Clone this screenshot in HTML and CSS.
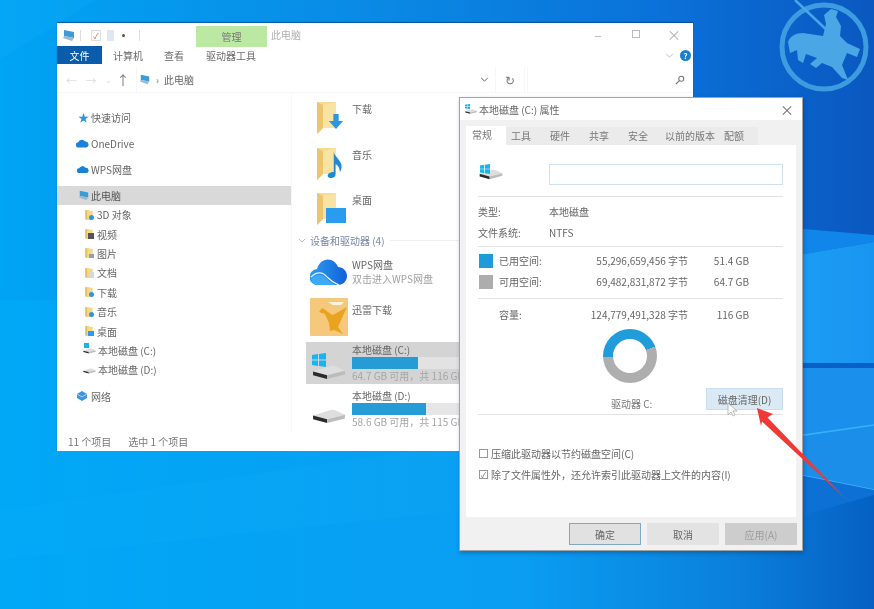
FILE: index.html
```html
<!DOCTYPE html>
<html lang="zh-CN">
<head>
<meta charset="utf-8">
<title>本地磁盘 (C:) 属性</title>
<link rel="stylesheet" href="styles.css">
</head>
<body>
<svg class="defs" width="0" height="0" aria-hidden="true">
  <symbol id="pc" viewBox="0 0 14 13"><path d="M2 1l10 2v6L2 7z" fill="#3d9bd8"/><path d="M2 7l10 2-2 3-9-3z" fill="#9fb9cc"/></symbol>
  <symbol id="mini-folder" viewBox="0 0 8 13"><path d="M0 1h4l1 1h3v10H2L0 11z" fill="#f4d98c"/><path d="M0 1l2 1v10l-2-1z" fill="#e8bf5e"/></symbol>
  <symbol id="folder" viewBox="0 0 20 32"><path d="M0 0h19v26H6l-6 6z" fill="#f6dc90"/><path d="M0 0l6 3v23l-6 6z" fill="#ecc56c"/><path d="M6 3l13-3v26H6z" fill="#f9e3a2"/></symbol>
  <symbol id="drive" viewBox="0 0 36 16"><path d="M1 7L20 1Q22 .5 24 1L35 6 16 11z" fill="#dedede"/><path d="M1 7L16 11V15L1 11z" fill="#2b2b2b"/><path d="M16 11L35 6V10L16 15z" fill="#bcbcbc"/></symbol>
  <symbol id="win" viewBox="0 0 14 14"><path d="M0 2l6-1v5.500H0zM7 1l7-1v6.500H7zM0 7.500h6V13l-6-1zM7 7.500h7V14l-7-1z" fill="#19b3ee"/></symbol>
  <symbol id="cloud" viewBox="0 0 20 12"><path d="M4 12a4 4 0 0 1-.500-8A6 6 0 0 1 14 3a4.500 4.500 0 0 1 1.500 9z" fill="#1a80d8"/></symbol>
</svg>

<main class="desktop">
  <svg class="wallpaper" viewBox="0 0 874 609" aria-hidden="true">
    <defs>
      <linearGradient id="wave" x1="0" y1="0" x2="1" y2="0"><stop offset="0" stop-color="#22a6fb"/><stop offset="1" stop-color="#1895f0"/></linearGradient>
    </defs>
    <path d="M0 0L95 0 0 60z" fill="#12adf8" opacity=".25"/>
    <path d="M0 560L0 510 560 430V500z" fill="#1cb4ff" opacity=".12"/>
    <path d="M700 220L874 235V242L700 272z" fill="#1186ea"/>
    <path d="M700 272L874 242V363H700z" fill="url(#wave)"/>
    <path d="M700 363H874V368H700z" fill="#0a60c8"/>
    <path d="M700 368H874V425L700 450z" fill="#1a90ec"/>
    <path d="M700 450L874 425V490L700 455z" fill="#1b8eea"/>
    <path d="M700 450L874 425" stroke="#36b2fb" stroke-width="1.500"/>
    <path d="M700 455L874 490" stroke="#42b5fa" stroke-width="1.500"/>
    <path d="M700 455L874 490V495L700 545z" fill="#0c70d4"/>
    <g class="logo">
      <circle cx="824" cy="47" r="42" fill="none" stroke="#3d9ce0" stroke-width="5"/>
      <path d="M795 0L850 52" stroke="#4ba6e6" stroke-width="2.500"/>
      <path d="M788 42C790 36 796 33 803 33L823 36 826 24 824 15 831 9 838 11 836 17 841 26 840 36 847 43 860 49 857 57 847 53 842 65 848 80 842 78 832 67 822 63 816 68 810 64 817 58 806 54 803 63 798 60 797 50 790 53z" fill="#4ba6e6"/>
    </g>
  </svg>

  <section class="window explorer">
    <header class="exp-title">
      <svg class="ic-14"><use href="#pc"/></svg>
      <span class="vsep"></span>
      <span class="qa-check">✓</span>
      <span class="qa-doc"></span>
      <span class="qa-dot"></span>
      <span class="vsep"></span>
      <span class="manage">管理</span>
      <span class="win-title">此电脑</span>
      <span class="controls">
        <span class="ctl">–</span><span class="ctl ctl-max"></span><span class="ctl">×</span>
      </span>
    </header>
    <nav class="ribbon">
      <span class="rtab rtab-file">文件</span>
      <span class="rtab rtab-pc">计算机</span>
      <span class="rtab rtab-view">查看</span>
      <span class="rtab rtab-tool">驱动器工具</span>
      <span class="rib-right">
        <svg class="chev" viewBox="0 0 10 6"><path d="M1 1l4 4 4-4" fill="none" stroke="#b5b5b5"/></svg>
        <span class="help">?</span>
      </span>
    </nav>
    <div class="addr">
      <div class="addr-nav">
        <span class="arrow">←</span><span class="arrow">→</span><span class="arrow arrow-sm">⌄</span><span class="arrow arrow-up">↑</span>
      </div>
      <div class="addr-box">
        <svg class="ic-12"><use href="#pc"/></svg><span class="crumb-sep">›</span><span>此电脑</span>
        <svg class="chev chev-dark" viewBox="0 0 10 6"><path d="M1 1l4 4 4-4" fill="none" stroke="#666" stroke-width="1.200"/></svg>
      </div>
      <div class="addr-refresh">↻</div>
      <div class="addr-search">
        <svg class="search" viewBox="0 0 12 12"><circle cx="7.500" cy="4.500" r="3" fill="none" stroke="#777" stroke-width="1.300"/><path d="M5 7l-4 4" stroke="#777" stroke-width="1.500"/></svg>
      </div>
    </div>
    <div class="exp-body">
      <ul class="nav">
        <li class="nav-item group"><span class="star">★</span>快速访问</li>
        <li class="nav-item group"><svg class="nav-cloud"><use href="#cloud"/></svg>OneDrive</li>
        <li class="nav-item group"><svg class="nav-cloud nav-cloud-sm"><use href="#cloud"/></svg>WPS网盘</li>
        <li class="nav-item group selected"><svg class="ic-12"><use href="#pc"/></svg>此电脑</li>
        <li class="nav-item child"><span class="nf nf-blue"><svg><use href="#mini-folder"/></svg></span>3D 对象</li>
        <li class="nav-item child"><span class="nf nf-dark"><svg><use href="#mini-folder"/></svg></span>视频</li>
        <li class="nav-item child"><span class="nf nf-gray"><svg><use href="#mini-folder"/></svg></span>图片</li>
        <li class="nav-item child"><span class="nf nf-light"><svg><use href="#mini-folder"/></svg></span>文档</li>
        <li class="nav-item child"><span class="nf nf-blue"><svg><use href="#mini-folder"/></svg></span>下载</li>
        <li class="nav-item child"><span class="nf nf-blue"><svg><use href="#mini-folder"/></svg></span>音乐</li>
        <li class="nav-item child"><span class="nf nf-desk"><svg><use href="#mini-folder"/></svg></span>桌面</li>
        <li class="nav-item child child-drive"><span class="nd nd-win"><svg><use href="#drive"/></svg></span>本地磁盘 (C:)</li>
        <li class="nav-item child child-drive"><span class="nd"><svg><use href="#drive"/></svg></span>本地磁盘 (D:)</li>
        <li class="nav-item group"><svg class="net" viewBox="0 0 12 12"><path d="M6 1l5 3v4l-5 3-5-3V4z" fill="#3c96d8"/><path d="M1 4l5 3 5-3" fill="none" stroke="#a8d4f0"/></svg>网络</li>
      </ul>
      <div class="content">
        <div class="folder-row">
          <span class="folder-ic">
            <svg class="folder"><use href="#folder"/></svg>
            <svg class="badge" viewBox="0 0 18 18"><path d="M6 0h6v8h5l-8 9-8-9h5z" fill="#2e96e0"/></svg>
          </span>
          <span class="name">下载</span>
        </div>
        <div class="folder-row">
          <span class="folder-ic">
            <svg class="folder"><use href="#folder"/></svg>
            <svg class="badge badge-note" viewBox="0 0 18 30"><path d="M7 0c1 6 9 9 9 17 0 3-1 5-2 6 0-6-3-8-5-9v12c0 3-3 4-5 4s-4-1-4-3 3-4 7-4z" fill="#1f88d8"/></svg>
          </span>
          <span class="name">音乐</span>
        </div>
        <div class="folder-row">
          <span class="folder-ic">
            <svg class="folder"><use href="#folder"/></svg>
            <span class="badge-desk"></span>
          </span>
          <span class="name">桌面</span>
        </div>
        <div class="section-head">
          <svg class="chev chev-sec" viewBox="0 0 10 6"><path d="M1 1l4 4 4-4" fill="none" stroke="#aaa"/></svg>
          <span>设备和驱动器 (4)</span><span class="section-line"></span>
        </div>
        <div class="dev dev-wps">
          <span class="dev-ic">
            <svg class="wps" viewBox="0 0 37 27"><defs><linearGradient id="wpsg" x1="0" y1="0" x2="1" y2="0"><stop offset="0" stop-color="#2f9df0"/><stop offset="1" stop-color="#0f62d8"/></linearGradient></defs><path d="M8 27a8 8 0 0 1-1-16C9 4 15 0 21 2c3 1 6 4 7 7 5 0 9 4 9 9s-4 9-9 9z" fill="url(#wpsg)"/><path d="M1 21c6-6 12-5 16 0 3 3 6 4 9 6H8c-3 0-6-2-7-6z" fill="#3caaf6"/><path d="M1 19c6-6 12-5 16 0 3 3 7 6 12 8" fill="none" stroke="#e6f4ff" stroke-width="1.200"/></svg>
          </span>
          <span class="dev-text"><span class="name">WPS网盘</span><span class="sub">双击进入WPS网盘</span></span>
        </div>
        <div class="dev dev-xl">
          <span class="dev-ic">
            <span class="xl">
              <svg viewBox="0 0 38 38"><path d="M12 10c4 2 8 6 11 7l14-8-5 11-4 9 5 7-9-4-4 1-1-8-4-9-6-2z" fill="#e8a320"/><path d="M18 4h16l-3 3H23z" fill="#fff4df"/></svg>
            </span>
          </span>
          <span class="dev-text"><span class="name">迅雷下载</span></span>
        </div>
        <div class="dev drive-row drive-c">
          <span class="dev-ic dev-drive">
            <svg class="w-logo"><use href="#win"/></svg>
            <svg class="big-drive"><use href="#drive"/></svg>
          </span>
          <span class="dev-text">
            <span class="name">本地磁盘 (C:)</span>
            <span class="track"><span class="fill" style="width:66px"></span></span>
            <span class="sub">64.7 GB 可用，共 116 GB</span>
          </span>
        </div>
        <div class="dev drive-row drive-d">
          <span class="dev-ic dev-drive">
            <svg class="big-drive"><use href="#drive"/></svg>
          </span>
          <span class="dev-text">
            <span class="name">本地磁盘 (D:)</span>
            <span class="track"><span class="fill" style="width:74px"></span></span>
            <span class="sub">58.6 GB 可用，共 115 GB</span>
          </span>
        </div>
      </div>
    </div>
    <footer class="status"><span>11 个项目</span><span>选中 1 个项目</span></footer>
  </section>

  <section class="window dialog">
    <header class="dlg-title">
      <span class="dlg-ic"><svg class="dlg-w"><use href="#win"/></svg><svg class="dlg-d"><use href="#drive"/></svg></span>
      <span>本地磁盘 (C:) 属性</span>
      <span class="dlg-close">×</span>
    </header>
    <div class="tabs">
      <span class="tab tab-on">常规</span><span class="tab">工具</span><span class="tab">硬件</span><span class="tab">共享</span><span class="tab">安全</span><span class="tab tab-wide">以前的版本</span><span class="tab">配额</span>
    </div>
    <div class="panel">
      <div class="head-row">
        <span class="head-ic"><svg class="head-d"><use href="#drive"/></svg><svg class="head-w"><use href="#win"/></svg></span>
        <span class="vol-input"></span>
      </div>
      <hr class="sep sep-a">
      <div class="info"><span>类型:</span><span>本地磁盘</span></div>
      <div class="info"><span>文件系统:</span><span>NTFS</span></div>
      <hr class="sep sep-b">
      <div class="space"><i class="sw sw-used"></i><span>已用空间:</span><span class="bytes">55,296,659,456 字节</span><span class="gb">51.4 GB</span></div>
      <div class="space"><i class="sw sw-free"></i><span>可用空间:</span><span class="bytes">69,482,831,872 字节</span><span class="gb">64.7 GB</span></div>
      <hr class="sep sep-c">
      <div class="space"><i class="sw"></i><span>容量:</span><span class="bytes">124,779,491,328 字节</span><span class="gb">116 GB</span></div>
      <div class="donut"><span class="hole"></span></div>
      <div class="drive-foot"><span class="drive-label">驱动器 C:</span><span class="clean">磁盘清理(D)</span></div>
      <hr class="sep sep-d">
      <label class="check check-first"><i class="box"></i>压缩此驱动器以节约磁盘空间(C)</label>
      <label class="check"><i class="box box-on">✓</i>除了文件属性外，还允许索引此驱动器上文件的内容(I)</label>
    </div>
    <footer class="dlg-foot">
      <span class="btn btn-def">确定</span><span class="btn">取消</span><span class="btn btn-off">应用(A)</span>
    </footer>
  </section>

  <svg class="overlay" viewBox="0 0 874 609" aria-hidden="true">
    <path d="M728 403v12l3-3 2 4 2-1-2-4h4z" fill="#fff" stroke="#aaa" stroke-width=".8"/>
    <path d="M757 408L773 414 767.500 417.500 850 503 762 421.500 761 426z" fill="#ee3a36"/>
  </svg>
</main>
</body>
</html>
```

FILE: styles.css
```css
* { box-sizing: border-box; }
html, body { margin: 0; padding: 0; }
body {
  font-family: "Noto Sans CJK SC", "Noto Sans", sans-serif;
  font-size: 10px;
  color: #5c5c5c;
  overflow: hidden;
}
.defs { position: absolute; }
ul { list-style: none; margin: 0; padding: 0; }
hr { margin: 0; border: 0; }
svg { display: block; flex: none; }

.desktop {
  position: relative;
  width: 874px;
  height: 609px;
  overflow: hidden;
  filter: blur(0.55px);
  background:
    linear-gradient(90deg, #00a4f4 0, #0a8ae4 42%, #0a72da 75%, #0a58c0 100%) top / 100% 300px no-repeat,
    linear-gradient(90deg, #00a8f6 0, #0a9df1 60%, #0a80dc 84%, #0660c4 100%) bottom / 100% 309px no-repeat;
}
.wallpaper, .overlay { position: absolute; inset: 0; width: 874px; height: 609px; }
.overlay { pointer-events: none; }

.window { position: absolute; background: #fff; }

/* Explorer */
.explorer {
  left: 57px; top: 23px; width: 636px; height: 428px;
  display: flex; flex-direction: column;
  box-shadow: 0 -1px 1px rgba(0, 60, 130, .6);
}
.exp-title { height: 24px; display: flex; align-items: center; padding-left: 5px; position: relative; }
.ic-14 { width: 14px; height: 13px; }
.ic-12 { width: 12px; height: 11px; }
.vsep { width: 1px; height: 11px; background: #ddd; margin: 0 6px 0 4px; }
.vsep + .qa-check { margin-left: 4px; }
.qa-check { width: 10px; height: 11px; border: 1px solid #ddd; color: #e0564a; font-size: 8px; line-height: 9px; text-align: center; }
.qa-doc { width: 7px; height: 11px; background: #dfe8f2; margin-left: 6px; }
.qa-dot { width: 3px; height: 3px; background: #555; border-radius: 50%; margin: 0 10px 0 8px; }
.manage {
  position: absolute; left: 139px; top: 3px; width: 71px; height: 21px;
  background: #bbe8a2; color: #777; display: flex; align-items: center; justify-content: center;
}
.win-title { position: absolute; left: 214px; top: 4px; color: #b0b0b0; }
.controls { position: absolute; right: 0; top: 0; display: flex; height: 22px; align-items: center; color: #b5b5b5; font-size: 14px; }
.ctl { width: 38px; text-align: center; }
.ctl-max { width: 8px; height: 8px; border: 1px solid #bbb; margin: 0 15px; }

.ribbon { height: 17px; display: flex; align-items: center; position: relative; }
.rtab { color: #6a6a6a; }
.rtab-file { width: 45px; height: 18px; margin-top: -1px; background: #0b5cab; color: #fff; display: flex; align-items: center; justify-content: center; }
.rtab-pc { margin-left: 11px; }
.rtab-view { margin-left: 21px; }
.rtab-tool { margin-left: 22px; }
.rib-right { margin-left: auto; display: flex; align-items: center; gap: 6px; padding-right: 2px; }
.chev { width: 9px; height: 5px; }
.help { width: 11px; height: 11px; border-radius: 50%; background: #1a7ed0; color: #fff; font-size: 8px; font-weight: 700; line-height: 11px; text-align: center; }

.addr { height: 29px; display: flex; align-items: stretch; padding-top: 3px; border-bottom: 1px solid #f6f6f6; }
.addr-nav { width: 79px; display: flex; align-items: center; padding-left: 9px; color: #ddd; font-size: 11px; }
.arrow { width: 21px; text-align: left; }
.arrow-sm { width: 12px; font-size: 8px; }
.arrow-up { color: #777; font-size: 13px; }
.addr-box { width: 359px; display: flex; align-items: center; padding: 0 6px 0 2px; background: #fff; border-left: 1px solid #f6f6f6; color: #666; }
.crumb-sep { margin: 0 5px; color: #777; }
.chev-dark { margin-left: auto; }
.addr-refresh { width: 30px; display: flex; align-items: center; justify-content: center; color: #777; font-size: 12px; border-left: 1px solid #f6f6f6; border-right: 1px solid #f6f6f6; }
.addr-search { margin-left: 2px; width: 163px; display: flex; align-items: center; justify-content: flex-end; padding-right: 5px; border-left: 1px solid #f6f6f6; }
.search { width: 10px; height: 10px; }

.exp-body { flex: 1; display: grid; grid-template-columns: 235px 1fr; min-height: 0; }
.nav { padding-top: 15px; border-right: 1px solid #f8f8f8; }
.nav-item { display: flex; align-items: center; white-space: nowrap; color: #666; }
.group { height: 19px; margin-top: 7px; padding-left: 22px; gap: 2px; }
.group:first-child { margin-top: 0; }
.selected { background: #d9d9d9; padding-left: 21px; color: #555; gap: 1px; }
.child { height: 19.4px; padding-left: 28px; gap: 4px; }
.child-drive { padding-left: 26px; gap: 2px; }
.star { color: #2b94dc; font-size: 11px; line-height: 1; margin-left: -1px; }
.nav-cloud { width: 13px; height: 9px; margin-left: -3px; }
.nav-cloud-sm { width: 12px; margin-left: -2px; }
.nf { position: relative; width: 8px; height: 12px; flex: none; }
.nf svg { width: 8px; height: 12px; }
.nf::after { content: ""; position: absolute; right: -1px; bottom: 1px; width: 5px; height: 5px; }
.nf-blue::after { background: #2e96e0; border-radius: 50%; }
.nf-dark::after { background: #555; width: 6px; height: 6px; }
.nf-gray::after { background: #8fa3a8; height: 4px; }
.nf-light::after { background: #d4d8dc; height: 6px; }
.nf-desk::after { background: #2a9cf0; width: 6px; height: 5px; }
.nd { position: relative; width: 13px; height: 8px; flex: none; }
.nd svg { width: 13px; height: 6px; margin-top: 2px; }
.nd-win::before { content: ""; position: absolute; left: 1px; top: -3px; width: 5px; height: 5px; background: #19b3ee; }
.net { width: 12px; height: 12px; margin-left: -3px; margin-right: 1px; }

.content { padding-top: 9px; min-width: 0; overflow: hidden; }
.folder-row { height: 32px; margin-bottom: 13.5px; margin-left: 25px; display: flex; }
.folder-row:nth-child(3) { margin-bottom: 0; }
.folder-ic { position: relative; width: 35px; height: 32px; flex: none; }
.folder { width: 20px; height: 32px; }
.badge { position: absolute; left: 11px; top: 11px; width: 16px; height: 18px; }
.badge-note { left: 10px; top: 4px; width: 17px; height: 26px; }
.badge-desk { position: absolute; left: 9px; top: 15px; width: 20px; height: 15px; background: #2a9cf0; }
.name { line-height: 14px; color: #666; white-space: nowrap; }
.sub { line-height: 14px; color: #a0a0a0; white-space: nowrap; }
.folder-row .name { display: block; }

.section-head { height: 14px; margin: 8px 0 0 6px; display: flex; align-items: center; color: #7a86a8; white-space: nowrap; gap: 4px; }
.section-line { flex: 1; height: 1px; background: #eee; margin-left: 1px; }
.chev-sec { width: 8px; height: 5px; }

.dev { display: flex; margin-left: 14px; }
.dev-ic { width: 46px; flex: none; padding-left: 4px; position: relative; }
.dev-text { display: flex; flex-direction: column; }
.dev-wps { margin-top: 11px; height: 27px; }
.wps { width: 37px; height: 27px; }
.dev-xl { margin-top: 13px; height: 38px; }
.dev-xl .dev-text { padding-top: 5px; }
.xl { display: block; width: 38px; height: 38px; background: #f6c87c; border-radius: 1px; }
.xl svg { width: 38px; height: 38px; }
.drive-row { height: 42px; }
.drive-row .dev-text { padding-top: 1px; }
.drive-c { margin-top: 6px; background: #d4d4d4; }
.drive-d { margin-top: 4px; }
.track { display: block; width: 150px; height: 12px; background: #e6e6e6; margin: 0; flex: none; }
.drive-c .track { background: #e2e2e2; }
.fill { display: block; height: 12px; background: #269cd6; }
.drive-row .sub { color: #a5a5a5; }
.dev-drive { padding: 0; }
.big-drive { position: absolute; left: 6px; bottom: 4px; width: 34px; height: 15px; }
.drive-d .big-drive { bottom: 6px; }
.w-logo { position: absolute; left: 6px; top: 11px; width: 14px; height: 14px; }

.status { height: 19px; display: flex; gap: 17px; align-items: center; padding-left: 11px; color: #777; }

/* Dialog */
.dialog {
  left: 459px; top: 97px; width: 344px; height: 454px;
  border: 1px solid #a3a3a3;
  box-shadow: 1px 2px 4px rgba(0, 40, 90, .35);
  display: flex; flex-direction: column;
  background: #f1f1f1;
}
.dlg-title { height: 22px; flex: none; background: #fff; display: flex; align-items: center; padding-left: 5px; color: #666; gap: 1px; }
.dlg-ic { position: relative; width: 13px; height: 11px; }
.dlg-w { position: absolute; left: 0; top: 0; width: 5px; height: 5px; }
.dlg-d { position: absolute; left: 0; bottom: 0; width: 12px; height: 7px; }
.dlg-close { margin-left: auto; margin-right: 8px; font-size: 14px; line-height: 1; color: #777; }

.tabs { height: 25px; flex: none; display: flex; padding: 7px 0 0 6px; }
.tab { padding: 0 14px 0 5px; background: #ebebeb; color: #777; line-height: 18px; white-space: nowrap; height: 18px; }
.tab-on { width: 40px; padding: 0 0 0 6px; background: #fff; height: 19px; margin-top: -1px; }
.tab-wide { margin-left: -2px; padding-right: 4px; }

.panel { flex: none; height: 372px; margin: 0 6px; background: #fff; padding: 0 13px 0 12px; position: relative; color: #666; }
.head-row { display: flex; padding-top: 19px; height: 40px; }
.head-ic { width: 71px; position: relative; }
.head-w { position: absolute; left: 2px; top: 0; width: 10px; height: 10px; }
.head-d { position: absolute; left: 1px; top: 5px; width: 24px; height: 11px; }
.vol-input { flex: 1; height: 21px; border: 1px solid #cfe0ee; }
.sep { height: 1px; background: #e2e2e2; }
.sep-a { margin-top: 11px; }
.info { height: 21px; display: grid; grid-template-columns: 71px 1fr; align-items: center; }
.sep-a + .info { margin-top: 4px; }
.sep-b { margin-top: 3px; margin-bottom: 3px; }
.space { height: 21px; display: grid; grid-template-columns: 21px 60px 129px 61px; align-items: center; }
.sw { width: 14px; height: 14px; margin-left: 1px; }
.sw-used { background: #1f9bd8; }
.sw-free { background: #adadad; }
.bytes, .gb { text-align: right; white-space: nowrap; }
.sep-c { margin: 6px 0 5px; }
.donut {
  width: 54px; height: 54px; border-radius: 50%; margin: 4px 0 0 125px;
  background: conic-gradient(from 268deg, #219cda 0 161deg, #aeaeae 161deg 360deg);
  display: flex; align-items: center; justify-content: center;
}
.hole { width: 34px; height: 34px; background: #fff; border-radius: 50%; }
.drive-foot { display: flex; height: 22px; margin-top: 5px; align-items: flex-end; }
.drive-label { margin-left: 133px; line-height: 12px; white-space: nowrap; color: #777; }
.clean {
  margin-left: auto; width: 77px; height: 22px; background: #dbe9f5; border: 1px solid #c9dff0;
  display: flex; align-items: center; justify-content: center; color: #666; white-space: nowrap;
}
.sep-d { margin-top: 4px; }
.check { height: 21px; display: flex; align-items: center; gap: 3px; white-space: nowrap; }
.check-first { margin-top: 28px; }
.box { width: 9px; height: 9px; margin-left: 1px; border: 1px solid #999; flex: none; font-size: 8px; line-height: 8px; text-align: center; font-style: normal; color: #777; }

.dlg-foot { flex: 1; display: flex; justify-content: flex-end; gap: 6px; padding: 6px 5px 0 0; }
.btn { width: 72px; height: 22px; background: #e3e3e3; color: #666; display: flex; align-items: center; justify-content: center; }
.btn-def { border: 1px solid #7fa8c4; background: #e1e1e1; }
.btn-off { background: #cdcdcd; color: #9c9c9c; }
```
